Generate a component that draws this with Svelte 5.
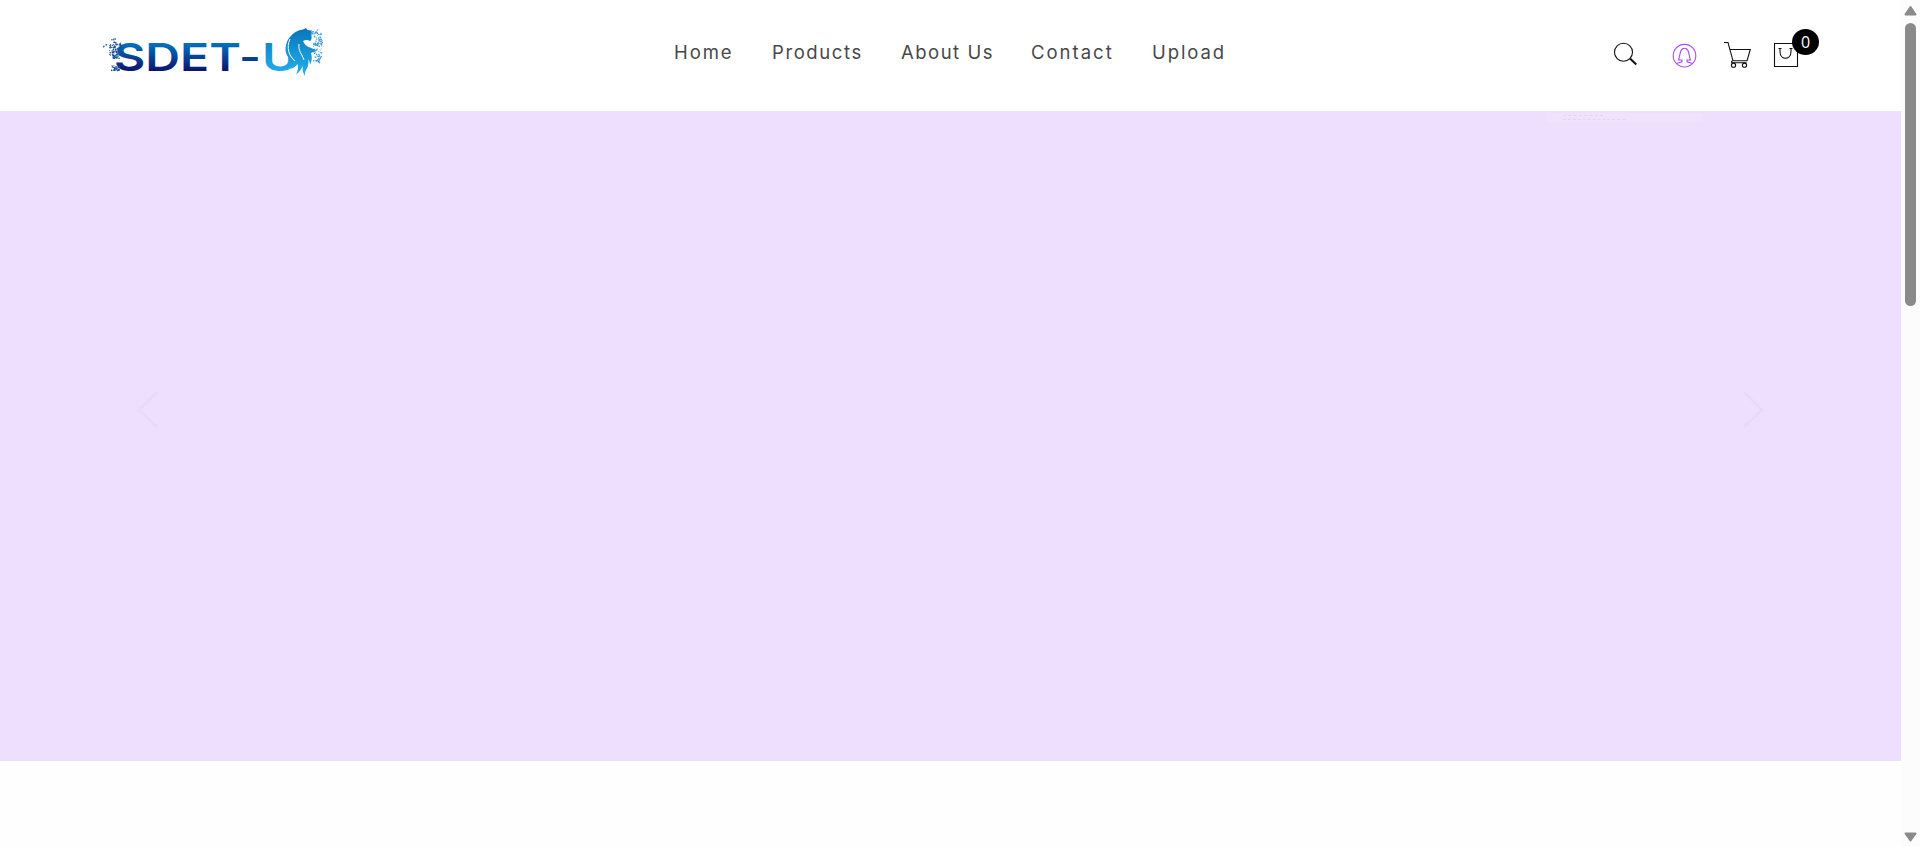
<script>
  const links = [
    { label: 'Home', width: 98, spacing: 1.9 },
    { label: 'Products', width: 129, spacing: 1.6 },
    { label: 'About Us', width: 130, spacing: 1.5 },
    { label: 'Contact', width: 121, spacing: 2 },
    { label: 'Upload', width: 90, spacing: 1.9 }
  ];

  // Particle fields that scatter from both ends of the wordmark.
  let seed = 7;
  const rand = () => (seed = (seed * 16807) % 2147483647) / 2147483647;
  const scatter = (n, x, y, w, h) =>
    Array.from({ length: n }, () => ({
      x: x + rand() * w,
      y: y + rand() * h,
      s: 0.6 + rand() * 1.1
    }));
  const left = [
    ...scatter(60, 8, 14, 12, 13),
    ...scatter(20, 11, 26, 7, 4),
    ...scatter(24, 9, 37, 9, 5),
    ...scatter(9, 1, 16, 9, 5),
    ...scatter(6, 9, 10, 5, 5)
  ];
  const right = [
    ...scatter(50, 212, 4, 9, 14),
    ...scatter(40, 212, 20, 8, 14),
    ...scatter(14, 209, 1, 8, 4)
  ];
</script>

<div class="page">
  <div class="content">
    <header>
      <a class="logo" href="#home" aria-label="SDET-U">
        <svg width="224" height="52" viewBox="0 0 224 52">
          <defs>
            <linearGradient id="navy" gradientUnits="userSpaceOnUse" x1="0" y1="15" x2="0" y2="43">
              <stop offset="0" stop-color="#0074c0" />
              <stop offset="1" stop-color="#0d146c" />
            </linearGradient>
            <linearGradient id="sky" gradientUnits="userSpaceOnUse" x1="0" y1="0" x2="0" y2="48">
              <stop offset="0" stop-color="#0876b9" />
              <stop offset="1" stop-color="#24b1ec" />
            </linearGradient>
          </defs>
          <g fill="url(#navy)">
            <text x="13" y="43" textLength="127" lengthAdjust="spacingAndGlyphs">SDET</text>
            <text x="138" y="43" textLength="22" lengthAdjust="spacingAndGlyphs">-</text>
          </g>
          <text x="161" y="43" fill="url(#sky)" textLength="36" lengthAdjust="spacingAndGlyphs">U</text>
          <path
            class="mane"
            d="M205 0L206.500 2 210 2.500 210.500 8Q211 12 209 13Q206 11 202 13Q204 18 209 19.500Q214 21.500 216 22Q213 24 210 25Q212 31 209 37Q209 34 207.500 31Q208 38 204.500 43L203.500 48Q201 43 201.500 38Q200 43 195 46.500Q198 41 196.500 36Q194 40 189 41Q193 37 192 32C183 29 183 18 188 10Q194 2 202 1.500Z"
          />
          <path class="cut" d="M189 11c-4 9-1 17 5 22M198 16c-1 7 3 10 5 16" />
          <g fill="#174f9b">
            {#each left as p}<rect x={p.x} y={p.y} width={p.s} height={p.s} />{/each}
          </g>
          <g fill="#3b98cf">
            {#each right as p}<rect x={p.x} y={p.y} width={p.s} height={p.s} />{/each}
          </g>
        </svg>
      </a>

      <nav>
        {#each links as link}
          <a href="#home" style="width:{link.width}px;letter-spacing:{link.spacing}px">{link.label}</a>
        {/each}
      </nav>

      <div class="tools">
        <svg class="search" width="26" height="28" viewBox="0 0 26 28">
          <circle cx="11.5" cy="12.3" r="9" />
          <path d="M18 18.500l6.300 6" stroke-width="2" />
        </svg>
        <svg class="user" width="26" height="26" viewBox="0 0 26 26">
          <circle cx="12.500" cy="12.700" r="11.300" />
          <path d="M4.500 20.500L10 18.800V17H6.500C8.500 13 7 5.300 12.500 5.300S16.500 13 18.500 17H15v1.800l5.500 1.700" />
        </svg>
        <svg class="cart" width="30" height="28" viewBox="0 0 30 28">
          <path d="M1 1.500h4l5 18.300h14.500M6.800 8.500h20.500l-3.300 11.300M10 19.800c-2 0-2 2-.3 2h14" />
          <circle cx="10.500" cy="24.200" r="2.100" /><circle cx="21.500" cy="24.200" r="2.100" />
        </svg>
        <div class="bag">
          <svg width="26" height="26" viewBox="0 0 26 26">
            <path d="M1.500 1.500h23v23h-23zM5.500 6.500h3M16.500 6.500h3M7 6.500v3c0 9 11 9 11 0v-3" />
          </svg>
          <span class="badge">0</span>
        </div>
      </div>
    </header>

    <main>
      <svg class="arrow" width="24" height="40" viewBox="0 0 24 40"><path d="M21 2L3 20l18 17" /></svg>
      <svg class="arrow" width="24" height="40" viewBox="0 0 24 40"><path d="M3 2l18 18L3 37" /></svg>
      <div class="ghost">
        <i></i><i></i>
      </div>
    </main>
    <div class="below"></div>
  </div>

  <aside>
    <svg width="19" height="847" viewBox="0 0 19 847">
      <path d="M9.500 7l5 7.500h-10zM9.500 840.500l5-7h-10z" stroke="#8a8a8a" stroke-width="2" stroke-linejoin="round" />
      <rect x="4" y="23" width="11" height="283" rx="5.500" />
    </svg>
  </aside>
</div>

<style>
  .page {
    display: flex;
    width: 1920px;
    height: 847px;
    overflow: hidden;
    background: #fff;
    font-family: Inter, sans-serif;
  }
  .content { width: 1901px; display: flex; flex-direction: column; }
  header {
    height: 111px;
    box-sizing: border-box;
    padding-left: 101px;
    display: flex;
    align-items: flex-start;
    background: #fff;
  }
  .logo { width: 573px; padding-top: 28px; height: 52px; }
  .logo svg { display: block; overflow: visible; }
  .logo text { font: 600 38.5px Inter, sans-serif; }
  .mane { fill: url(#sky); }
  .cut { fill: none; stroke: #fff; stroke-width: 1; }
  nav { display: flex; width: 938px; padding-top: 39px; }
  nav a {
    flex: none;
    color: #484848;
    font-size: 18.5px;
    font-weight: 400;
    line-height: 26px;
    white-space: nowrap;
    text-decoration: none;
  }
  .tools { display: flex; fill: none; }
  .tools svg { display: block; fill: none; stroke: #111; stroke-width: 1.1; }
  .search { margin-top: 40px; }
  .tools .user { margin: 43px 0 0 34px; stroke: #a64df0; }
  .cart { margin: 41px 0 0 25px; }
  .bag { position: relative; margin: 42px 0 0 20px; }
  .badge {
    position: absolute;
    left: 19px;
    top: -13px;
    width: 27px;
    height: 26px;
    border-radius: 50%;
    background: #000;
    color: #fff;
    font: 16px/26px "Open Sans", sans-serif;
    text-align: center;
  }
  main {
    position: relative;
    height: 650px;
    box-sizing: border-box;
    padding: 0 136px;
    display: flex;
    align-items: center;
    justify-content: space-between;
    background: #eedfff;
  }
  .arrow { fill: none; stroke: #ebdaf7; stroke-width: 2.5; margin-bottom: 53px; }
  .ghost {
    position: absolute;
    left: 1547px;
    top: 2px;
    width: 156px;
    height: 9px;
    background: #f0e2ff;
  }
  .ghost i { display: block; width: 40px; margin: 2px 0 0 16px; border-top: 1px dashed #e5d5f5; }
  .ghost i + i { width: 62px; margin-top: 3px; }
  .below { flex: 1; background: #fefefe; }
  aside { width: 19px; background: #fcfcfc; }
  aside svg { display: block; fill: #8a8a8a; }
</style>
